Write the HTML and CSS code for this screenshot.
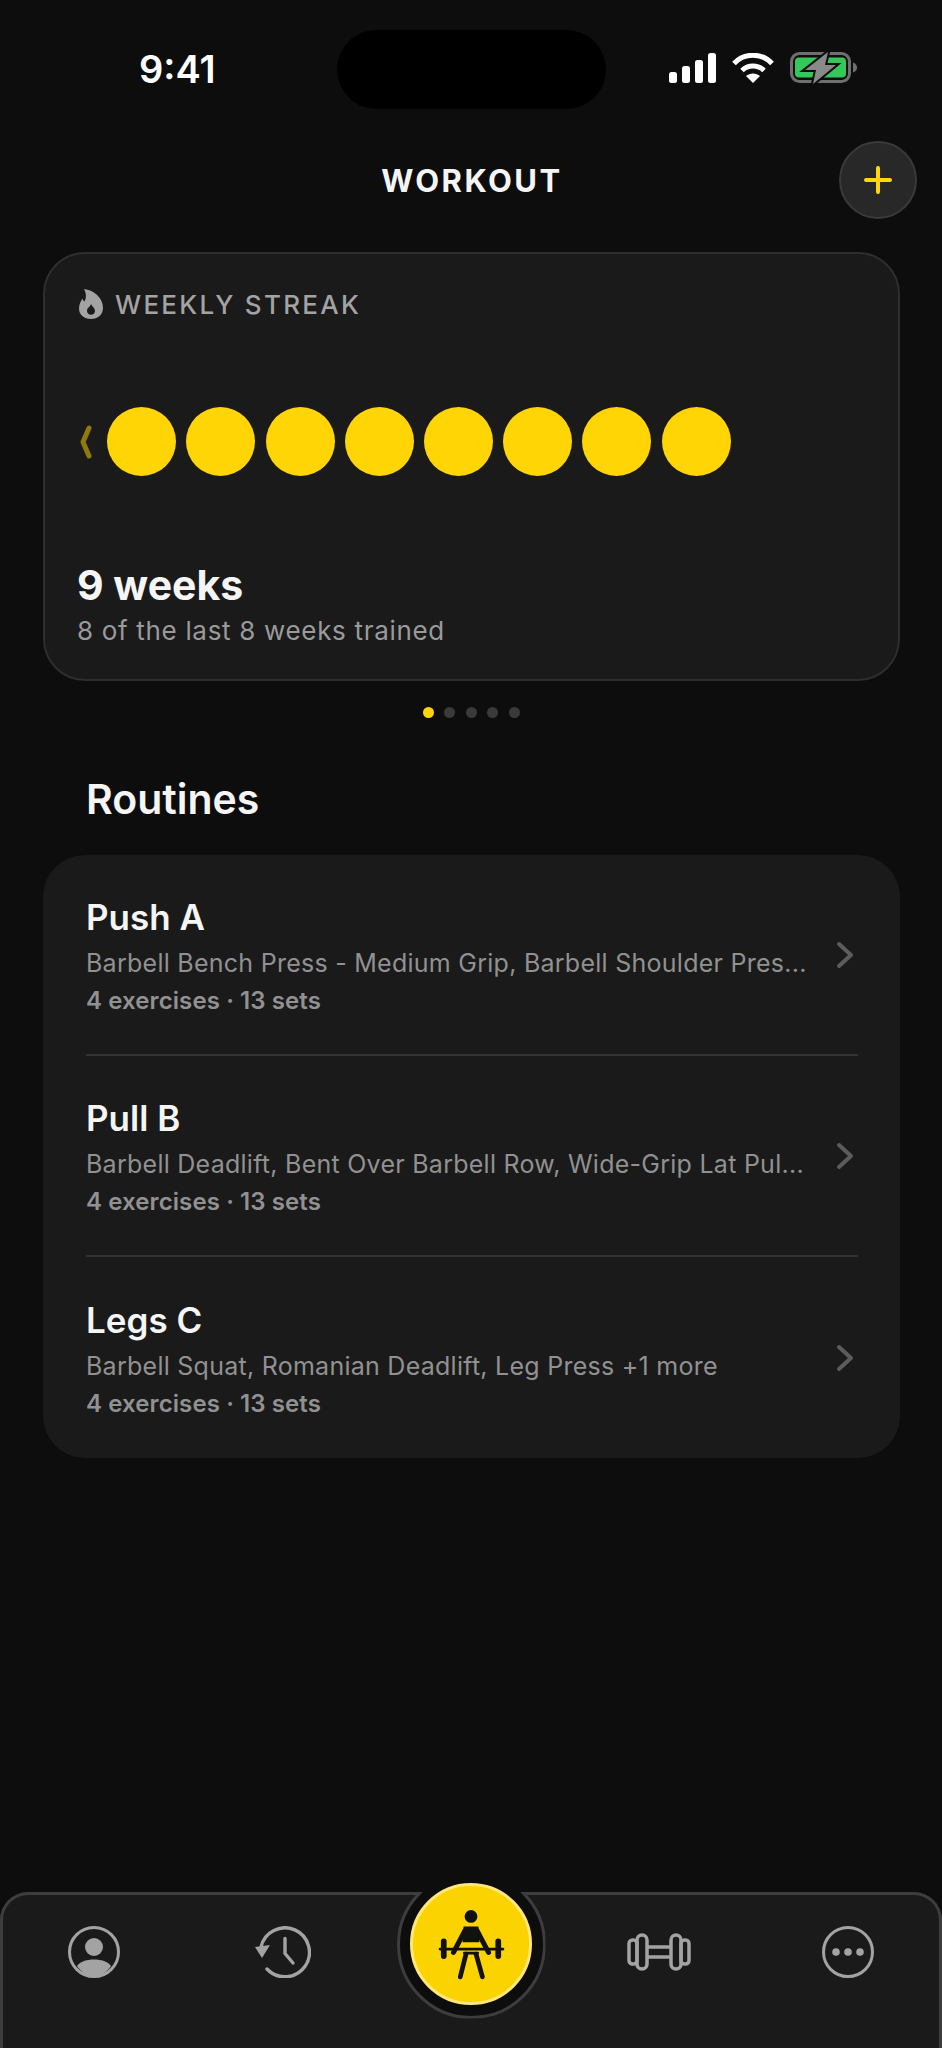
FILE: index.html
```html
<!DOCTYPE html>
<html>
<head>
  <title>Workout</title>
  <link rel="stylesheet" href="styles.css">
</head>
<body>
  <div class="screen">
    <div class="status-bar">
      <span class="time">9:41</span>
      <div class="island"></div>
      <div class="status-icons">
        <svg width="47" height="30" viewBox="0 0 47 30"><g fill="#fff"><rect x="0" y="19" width="8" height="11" rx="2.5"/><rect x="13" y="13" width="8" height="17" rx="2.5"/><rect x="26" y="7" width="8" height="23" rx="2.5"/><rect x="39" y="0" width="8" height="30" rx="2.5"/></g></svg>
        <svg width="42" height="30" viewBox="0 0 42 30"><g fill="none" stroke="#fff" stroke-width="5"><path d="M2 10.5C12-.5 30-.5 40 10.5"/><path d="M10 17.5C16 11.5 26 11.5 32 17.5"/></g><path d="M21 30l-7-7c4-3.5 10-3.5 14 0z" fill="#fff"/></svg>
        <svg width="68" height="32" viewBox="0 0 68 32"><rect x="1.5" y="1.5" width="58" height="28" rx="8" fill="none" stroke="#6f6f6f" stroke-width="3"/><rect x="5" y="5.5" width="51" height="20" rx="4" fill="#34c759"/><path d="M63 10.5c3 1 4 3 4 5s-1 4-4 5z" fill="#6f6f6f"/><path d="M38 0L15 18h11l-3 14 23-19H35z" fill="#8a8a8a" stroke="#0d0d0d" stroke-width="4" paint-order="stroke"/></svg>
      </div>
    </div>

    <header class="nav">
      <h1>WORKOUT</h1>
      <button class="add-btn">
        <svg width="28" height="28" viewBox="0 0 28 28"><path d="M14 2v24M2 14h24" stroke="#ffd60a" stroke-width="4" stroke-linecap="round"/></svg>
      </button>
    </header>

    <section class="card streak">
      <div class="streak-label">
        <svg width="24" height="30" viewBox="0 0 24 30"><path fill-rule="evenodd" fill="#a3a3a3" d="M5 0c9 1 19 8 19 19 0 6.5-5 11-12 11S0 25.500 0 19.500C0 15 2 12 3.500 9.500c.5 1.500 1 2.500 2 3C7.500 9 7.500 4.500 5 0zM12 15c-.5 2.500-4 3.500-4 7 0 2.200 1.800 3.700 4 3.700s4-1.500 4-3.700c0-3-2.500-4-4-7z"/></svg>
        <span>WEEKLY STREAK</span>
      </div>
      <div class="streak-row">
        <svg class="streak-back" width="12" height="34" viewBox="0 0 12 34"><path d="M9 3L3 17l6 14" fill="none" stroke="#8f7a0a" stroke-width="5" stroke-linecap="round" stroke-linejoin="round"/></svg>
        <div class="dot"></div>
        <div class="dot"></div>
        <div class="dot"></div>
        <div class="dot"></div>
        <div class="dot"></div>
        <div class="dot"></div>
        <div class="dot"></div>
        <div class="dot"></div>
      </div>
      <div class="streak-text">
        <div class="streak-big">9 weeks</div>
        <div class="streak-sub">8 of the last 8 weeks trained</div>
      </div>
    </section>

    <div class="pager">
      <span class="on"></span><span></span><span></span><span></span><span></span>
    </div>

    <h2 class="section-title">Routines</h2>

    <section class="card routines">
      <div class="routine">
        <div class="routine-text">
          <div class="routine-name">Push A</div>
          <div class="routine-list">Barbell Bench Press - Medium Grip, Barbell Shoulder Pres...</div>
          <div class="routine-meta">4 exercises · 13 sets</div>
        </div>
        <svg class="chevron" width="18" height="28" viewBox="0 0 18 28"><path d="M3 3l12 11L3 25" fill="none" stroke="#5c5c5c" stroke-width="4" stroke-linecap="round" stroke-linejoin="round"/></svg>
      </div>
      <div class="routine">
        <div class="routine-text">
          <div class="routine-name">Pull B</div>
          <div class="routine-list">Barbell Deadlift, Bent Over Barbell Row, Wide-Grip Lat Pul...</div>
          <div class="routine-meta">4 exercises · 13 sets</div>
        </div>
        <svg class="chevron" width="18" height="28" viewBox="0 0 18 28"><path d="M3 3l12 11L3 25" fill="none" stroke="#5c5c5c" stroke-width="4" stroke-linecap="round" stroke-linejoin="round"/></svg>
      </div>
      <div class="routine">
        <div class="routine-text">
          <div class="routine-name">Legs C</div>
          <div class="routine-list">Barbell Squat, Romanian Deadlift, Leg Press +1 more</div>
          <div class="routine-meta">4 exercises · 13 sets</div>
        </div>
        <svg class="chevron" width="18" height="28" viewBox="0 0 18 28"><path d="M3 3l12 11L3 25" fill="none" stroke="#5c5c5c" stroke-width="4" stroke-linecap="round" stroke-linejoin="round"/></svg>
      </div>
    </section>

    <nav class="tab-bar">
      <div class="tab">
        <svg width="52" height="52" viewBox="0 0 52 52"><circle cx="26" cy="26" r="24.5" fill="none" stroke="#a3a3a3" stroke-width="3"/><circle cx="26" cy="21" r="9" fill="#a3a3a3"/><path d="M9 40c3-4.500 10-6.500 17-6.500S40 35.500 43 40c-4 6-10 10-17 10S13 46 9 40z" fill="#a3a3a3"/></svg>
      </div>
      <div class="tab">
        <svg width="56" height="52" viewBox="0 0 56 52"><path d="M6 21A24.500 24.500 0 1 1 12 43" fill="none" stroke="#a3a3a3" stroke-width="3.4" stroke-linecap="round"/><path d="M0 21l15-2-8 13z" fill="#a3a3a3"/><path d="M30 12.500v15l8 9.500" fill="none" stroke="#a3a3a3" stroke-width="3.4" stroke-linecap="round" stroke-linejoin="round"/></svg>
      </div>
      <div class="tab"></div>
      <div class="tab">
        <svg width="64" height="38" viewBox="0 0 64 38"><g fill="none" stroke="#a3a3a3" stroke-width="3.5"><rect x="2" y="7" width="8" height="24" rx="3.5"/><rect x="10" y="2" width="10" height="34" rx="5"/><path d="M20 14h24M20 24h24"/><rect x="44" y="2" width="10" height="34" rx="5"/><rect x="54" y="7" width="8" height="24" rx="3.5"/></g></svg>
      </div>
      <div class="tab">
        <svg width="52" height="52" viewBox="0 0 52 52"><circle cx="26" cy="26" r="24.5" fill="none" stroke="#a3a3a3" stroke-width="3"/><g fill="#a3a3a3"><circle cx="14" cy="26" r="3.8"/><circle cx="26" cy="26" r="3.8"/><circle cx="38" cy="26" r="3.8"/></g></svg>
      </div>
      <div class="center-ring"></div>
      <button class="center-btn">
        <svg width="74" height="74" viewBox="130 110 220 220">
          <circle cx="240" cy="138" r="19" fill="#111"/>
          <path d="M218 168h44l3 47h-50z" fill="#111"/>
          <g fill="none" stroke="#111" stroke-linecap="round" stroke-linejoin="round">
            <path d="M222 180l-34 65M258 180l34 65" stroke-width="15"/>
            <path d="M148 235h187" stroke-width="8"/>
            <path d="M159 212v44M321 212v44" stroke-width="17"/>
            <path d="M225 250l-17 68M255 250l19 68" stroke-width="14"/>
            <path d="M220 247h40" stroke-width="8"/>
          </g>
        </svg>
      </button>
    </nav>
  </div>
</body>
</html>
```

FILE: styles.css
```css
* {
  box-sizing: border-box;
}

body {
  margin: 0;
  background-color: #0d0d0d;
  font-family: Inter, "Liberation Sans", sans-serif;
  color: #f5f5f5;
}

.screen {
  position: relative;
  width: 942px;
  height: 2048px;
  overflow: hidden;
  padding: 30px 0 0;
}

.status-bar {
  display: flex;
  align-items: center;
  height: 79px;
  padding: 0 0 0 139px;
}

.time {
  width: 198px;
  font-size: 38px;
  font-weight: 600;
  color: #fff;
  line-height: 79px;
}

.island {
  width: 269px;
  height: 79px;
  border-radius: 40px;
  background-color: #000;
}

.status-icons {
  display: flex;
  align-items: center;
  gap: 16px;
  margin-left: 63px;
  padding-bottom: 4px;
}

.nav {
  position: relative;
  display: flex;
  justify-content: center;
  align-items: center;
  height: 78px;
  margin-top: 32px;
}

.nav h1 {
  margin: 0;
  padding-left: 2px;
  font-size: 31px;
  font-weight: 700;
  letter-spacing: 2.5px;
  color: #f5f5f5;
}

.add-btn {
  position: absolute;
  right: 25px;
  top: 0;
  display: flex;
  justify-content: center;
  align-items: center;
  width: 78px;
  height: 78px;
  border-radius: 50%;
  border: 2px solid #3a3a3a;
  background-color: #282828;
  padding: 0;
}

.card {
  margin: 0 42px 0 43px;
  background-color: #1a1a1a;
  border-radius: 42px;
}

.streak {
  height: 429px;
  margin-top: 33px;
  padding: 35px 34px 0;
  border: 2px solid #2e2e2e;
}

.streak-label {
  display: flex;
  align-items: center;
  gap: 12px;
  height: 30px;
  font-size: 26px;
  font-weight: 500;
  letter-spacing: 2.3px;
  color: #a3a3a3;
}

.streak-row {
  display: flex;
  align-items: center;
  gap: 10.2px;
  margin-top: 88px;
}

.streak-back {
  margin-left: 1px;
  margin-right: 5px;
}

.dot {
  width: 69px;
  height: 69px;
  border-radius: 50%;
  background-color: #ffd505;
}

.streak-text {
  margin: 85px 0 0 -2px;
}

.streak-big {
  font-size: 41px;
  font-weight: 700;
  line-height: 48px;
  color: #f5f5f5;
}

.streak-sub {
  margin-top: 5px;
  font-size: 26px;
  line-height: 34px;
  letter-spacing: 0.68px;
  color: #9a9a9a;
}

.pager {
  display: flex;
  justify-content: center;
  gap: 10.5px;
  margin-top: 26px;
}

.pager span {
  width: 11px;
  height: 11px;
  border-radius: 50%;
  background-color: #3a3a3a;
}

.pager .on {
  background-color: #ffd505;
}

.section-title {
  margin: 56px 0 0 86px;
  font-size: 41px;
  font-weight: 600;
  line-height: 50px;
  color: #f5f5f5;
}

.routines {
  margin-top: 31px;
  height: 603px;
  padding: 0 42px 0 43px;
}

.routine {
  display: flex;
  align-items: center;
  height: 201px;
  padding-top: 6px;
  border-bottom: 2px solid #333;
}

.routine:last-child {
  border-bottom: none;
}

.routine-text {
  flex: 1;
  min-width: 0;
}

.routine-name {
  margin-top: -3px;
  font-size: 35px;
  font-weight: 600;
  line-height: 42px;
  color: #f5f5f5;
}

.routine-list {
  margin-top: 9px;
  font-size: 25px;
  line-height: 32px;
  letter-spacing: 0.26px;
  color: #919191;
  white-space: nowrap;
}

.routine-meta {
  margin-top: 6px;
  font-size: 24px;
  font-weight: 600;
  line-height: 32px;
  letter-spacing: 0.1px;
  color: #919191;
}

.chevron {
  margin-right: 4px;
  margin-bottom: 5px;
}

.tab-bar {
  position: absolute;
  left: 0;
  right: 0;
  top: 1892px;
  bottom: -30px;
  display: flex;
  padding: 34px 0 0;
  background-color: #1a1a1a;
  box-shadow: inset 0 0 0 3px #3d3d3d;
  border-radius: 28px;
}

.tab {
  flex: 1;
  display: flex;
  justify-content: center;
  align-items: center;
  height: 52px;
}

/* ring is only visible from the bar's top edge down */
.center-ring {
  position: absolute;
  left: 396.5px;
  top: -22.5px;
  width: 149px;
  height: 149px;
  border-radius: 50%;
  background-color: #0d0d0d;
  border: 3px solid #3d3d3d;
  clip-path: inset(22.5px 0 0 0);
}

.center-btn {
  position: absolute;
  left: 410px;
  top: -9px;
  width: 122px;
  height: 122px;
  padding: 0;
  display: flex;
  justify-content: center;
  align-items: center;
  border-radius: 50%;
  background-color: #fbd300;
  border: 3px solid #ffe77a;
}
```
